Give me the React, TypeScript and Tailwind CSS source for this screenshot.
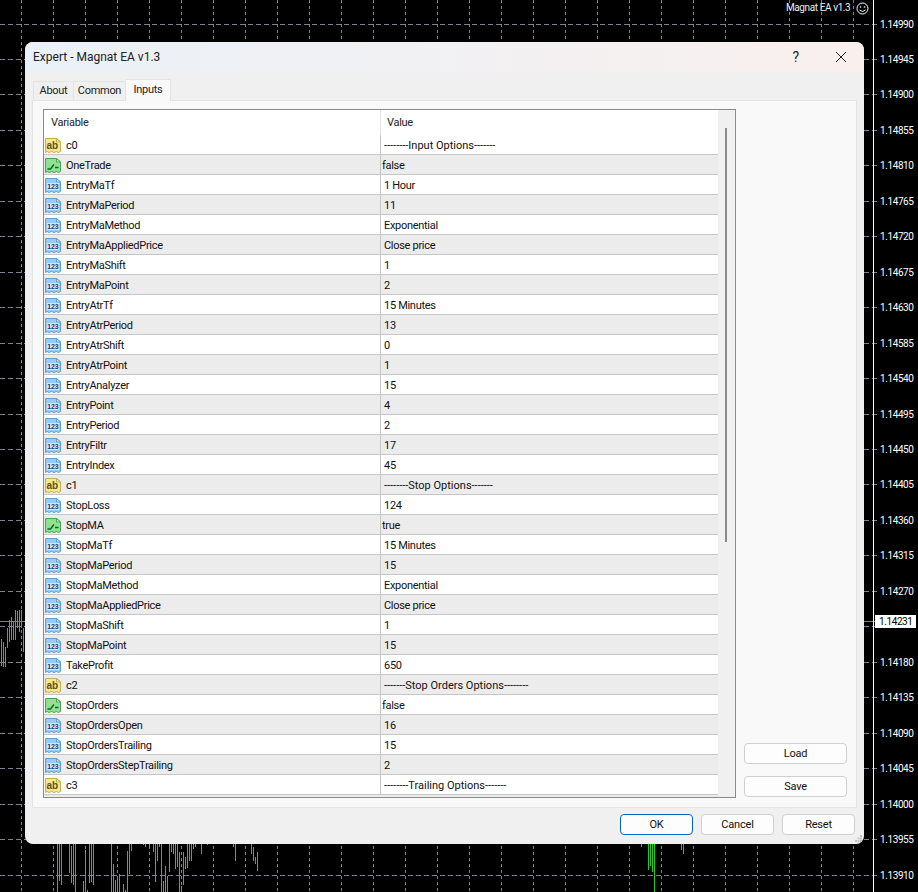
const font = { fontFamily: '"Roboto", "Liberation Sans", sans-serif' };

type Kind = 'ab' | 'bool' | 'num';

const rows: [Kind, string, string][] = [
  ['ab', 'c0', '--------Input Options-------'],
  ['bool', 'OneTrade', 'false'],
  ['num', 'EntryMaTf', '1 Hour'],
  ['num', 'EntryMaPeriod', '11'],
  ['num', 'EntryMaMethod', 'Exponential'],
  ['num', 'EntryMaAppliedPrice', 'Close price'],
  ['num', 'EntryMaShift', '1'],
  ['num', 'EntryMaPoint', '2'],
  ['num', 'EntryAtrTf', '15 Minutes'],
  ['num', 'EntryAtrPeriod', '13'],
  ['num', 'EntryAtrShift', '0'],
  ['num', 'EntryAtrPoint', '1'],
  ['num', 'EntryAnalyzer', '15'],
  ['num', 'EntryPoint', '4'],
  ['num', 'EntryPeriod', '2'],
  ['num', 'EntryFiltr', '17'],
  ['num', 'EntryIndex', '45'],
  ['ab', 'c1', '--------Stop Options-------'],
  ['num', 'StopLoss', '124'],
  ['bool', 'StopMA', 'true'],
  ['num', 'StopMaTf', '15 Minutes'],
  ['num', 'StopMaPeriod', '15'],
  ['num', 'StopMaMethod', 'Exponential'],
  ['num', 'StopMaAppliedPrice', 'Close price'],
  ['num', 'StopMaShift', '1'],
  ['num', 'StopMaPoint', '15'],
  ['num', 'TakeProfit', '650'],
  ['ab', 'c2', '-------Stop Orders Options--------'],
  ['bool', 'StopOrders', 'false'],
  ['num', 'StopOrdersOpen', '16'],
  ['num', 'StopOrdersTrailing', '15'],
  ['num', 'StopOrdersStepTrailing', '2'],
  ['ab', 'c3', '--------Trailing Options-------'],
];

const prices = [
  '1.14990', '1.14945', '1.14900', '1.14855', '1.14810', '1.14765', '1.14720', '1.14675', '1.14630',
  '1.14585', '1.14540', '1.14495', '1.14450', '1.14405', '1.14360', '1.14315', '1.14270', '1.14225',
  '1.14180', '1.14135', '1.14090', '1.14045', '1.14000', '1.13955', '1.13910',
];

// x, top, bottom of each candle wick
const bars: [number, number, number][] = [
  [1, 639, 666], [3, 642, 667], [5, 647, 667], [7, 628, 648], [9, 620, 642], [11, 617, 640], [13, 622, 640],
  [15, 610, 640], [17, 611, 628], [19, 610, 632], [21, 610, 628], [23, 628, 652],
  [57, 844, 892], [59, 844, 881], [61, 844, 885], [69, 844, 873], [71, 846, 883], [73, 844, 885], [75, 844, 892],
  [83, 881, 892], [85, 850, 892], [87, 890, 892], [89, 844, 883], [91, 844, 882], [93, 844, 885],
  [111, 844, 892], [113, 864, 892], [115, 880, 892], [117, 876, 892], [119, 874, 892], [123, 884, 892], [125, 890, 892],
  [127, 851, 892], [129, 844, 874], [131, 844, 851], [143, 844, 845], [145, 844, 847], [149, 844, 848], [153, 844, 852],
  [155, 844, 882], [157, 844, 861], [159, 844, 847], [161, 844, 892], [163, 881, 892], [165, 866, 892], [167, 876, 892],
  [169, 844, 872], [171, 844, 852], [173, 844, 854], [175, 844, 869], [177, 844, 867], [179, 852, 892], [181, 886, 892],
  [183, 852, 885], [185, 857, 869], [187, 844, 868], [189, 844, 861], [191, 844, 861], [193, 844, 849], [195, 844, 847],
  [201, 844, 854], [207, 844, 845], [233, 844, 847], [235, 844, 861], [251, 844, 854], [253, 847, 861], [255, 857, 864],
  [257, 852, 871],
  [641, 844, 847], [648, 844, 870], [650, 844, 866], [652, 844, 872], [654, 844, 892], [681, 844, 850], [683, 844, 854],
];

function Chart() {
  const vert = Array.from({ length: 27 }, (_, i) => 21 + i * 32);
  return (
    <svg className="absolute left-0 top-0 tracking-[-0.4px]" width="918" height="892" style={font}>
      {vert.map((x) => (
        <line key={x} x1={x + 0.5} y1="0" x2={x + 0.5} y2="892" stroke="#7d828c" strokeDasharray="3 3" />
      ))}
      {prices.map((_, i) => {
        const y = Math.round(23.5 + i * 35.46) + 0.5;
        return <line key={i} x1="0" y1={y} x2="879" y2={y} stroke="#7d828c" strokeDasharray="5 3" />;
      })}
      <line x1="0" y1="621.5" x2="878" y2="621.5" stroke="#7f7f7f" />
      {bars.map(([x, a, b], i) => (
        <line key={i} x1={x + 0.5} y1={a} x2={x + 0.5} y2={b} stroke="#22cc22" />
      ))}
      <line x1="873.5" y1="0" x2="873.5" y2="892" stroke="#ffffff" />
      {prices.map((p, i) =>
        p === '1.14225' ? null : (
          <text key={p} x="880" y={Math.round(23.5 + i * 35.46) + 4} fill="#ffffff" fontSize="10">
            {p}
          </text>
        ),
      )}
      <rect x="875" y="615" width="41" height="13" fill="#ffffff" />
      <text x="879" y="625" fill="#000000" fontSize="10">1.14231</text>
      <text x="786" y="11" fill="#e6eef8" fontSize="10">Magnat EA  v1.3</text>
      <circle cx="862.5" cy="8.5" r="5.5" fill="none" stroke="#ffffff" />
      <circle cx="860.5" cy="7" r="0.8" fill="#ffffff" />
      <circle cx="864.5" cy="7" r="0.8" fill="#ffffff" />
      <path d="M859.5 10 Q862.5 13 865.5 10" fill="none" stroke="#ffffff" />
    </svg>
  );
}

function TypeIcon({ kind }: { kind: Kind }) {
  const c = {
    ab: { fill: '#f6e690', stroke: '#c3ad55', fold: '#fdf6cf' },
    bool: { fill: '#8fe08f', stroke: '#45a552', fold: '#d6f6d6' },
    num: { fill: '#9ccaf0', stroke: '#5f9ed2', fold: '#dcedfb' },
  }[kind];
  return (
    <svg width="17" height="16" viewBox="0 0 17 16" className="shrink-0">
      <path
        d="M0.5 1.5 H11.5 L15.5 5 V14.5 L13.5 15.5 L11.5 14.5 L9 15.5 L6.5 14.5 L4 15.5 L2 14.5 L0.5 15.5 Z"
        fill={c.fill}
        stroke={c.stroke}
      />
      <path d="M11.5 1.5 V5 H15.5 Z" fill={c.fold} stroke={c.stroke} />
      {kind === 'ab' && (
        <text x="1.5" y="12" fontSize="10" fontWeight="700" fill="#5c5214" style={{ fontFamily: '"Liberation Sans", sans-serif' }}>
          ab
        </text>
      )}
      {kind === 'num' && (
        <>
          <rect x="2" y="6" width="12" height="7" fill="#d4e7f8" />
          <text x="2.2" y="12.2" fontSize="6.8" fontWeight="700" fill="#173f6b" style={{ fontFamily: '"Liberation Sans", sans-serif' }}>
            123
          </text>
        </>
      )}
      {kind === 'bool' && (
        <path d="M2.5 12 H5.5 L9 7.5 M10 10.5 H13.5" fill="none" stroke="#14632a" strokeWidth="1.4" />
      )}
    </svg>
  );
}

function DlgButton({ label, primary, className }: { label: string; primary?: boolean; className: string }) {
  return (
    <button
      className={`h-[21px] rounded-[4px] border bg-[#fdfdfd] pt-[1px] text-[11px] tracking-[-0.2px] text-[#111] ${
        primary ? 'border-[#0067c0]' : 'border-[#d0d0d0]'
      } ${className}`}
    >
      {label}
    </button>
  );
}

function Row({ kind, name, value, odd }: { kind: Kind; name: string; value: string; odd: boolean }) {
  return (
    <div className={`grid h-5 shrink-0 grid-cols-[337px_1fr] border-b border-[#c6c6c6] ${odd ? 'bg-[#ececec]' : 'bg-white'}`}>
      <div className="flex items-center gap-[4px] border-r border-[#c6c6c6] pl-[1px]">
        <TypeIcon kind={kind} />
        <span className="pt-[1px] text-[11px] leading-none tracking-[-0.3px] text-[#111]">{name}</span>
      </div>
      <div
        className={`flex items-center pt-[1px] text-[11px] leading-none text-[#111] ${
          kind === 'ab' ? 'pl-[3px] tracking-normal' : kind === 'bool' ? 'pl-[1px] tracking-[-0.3px]' : 'pl-[3px] tracking-[-0.3px]'
        }`}
      >
        {value}
      </div>
    </div>
  );
}

export default function App() {
  return (
    <div className="relative h-[892px] w-[918px] overflow-hidden bg-black" style={font}>
      <Chart />
      <div className="absolute left-[25px] top-[42px] flex h-[802px] w-[839px] flex-col rounded-lg bg-[#f0f0f0]">
        <div className="flex h-[30px] shrink-0 items-center justify-between rounded-t-lg bg-gradient-to-r from-[#eaf1f7] to-[#f9f0ee] pl-2 pr-[17px] text-xs text-[#222]">
          <span>Expert - Magnat EA v1.3</span>
          <div className="flex items-center gap-[36px]">
            <span className="text-sm">?</span>
            <svg width="12" height="12" viewBox="0 0 12 12">
              <path d="M1 1 L11 11 M11 1 L1 11" stroke="#222" fill="none" />
            </svg>
          </div>
        </div>

        <div className="mt-[7px] flex h-[21px] shrink-0 items-end pl-2 text-[11px] tracking-[-0.3px] text-[#222]">
          <div className="flex h-[19px] w-[41px] items-center justify-center border border-b-0 border-[#e4e4e4] bg-[#f0f0f0] pt-[1px]">About</div>
          <div className="flex h-[19px] w-[52px] items-center justify-center border border-b-0 border-l-0 border-[#e4e4e4] bg-[#f0f0f0] pt-[1px]">Common</div>
          <div className="relative top-[1px] flex h-[22px] w-[45px] items-start justify-center border border-b-0 border-l-0 border-[#e4e4e4] bg-[#f9f9f9] pt-[2px]">Inputs</div>
        </div>

        <div className="mx-[7px] flex h-[708px] shrink-0 gap-2 border border-[#e4e4e4] bg-[#f9f9f9] pl-[10px] pt-2">
          <div className="flex h-[689px] w-[693px] shrink-0 overflow-hidden border border-[#8a8a8a] bg-white">
            <div className="flex w-[674px] shrink-0 flex-col">
              <div className="grid h-[25px] shrink-0 grid-cols-[337px_1fr] text-[11px] tracking-[-0.3px] text-[#222]">
                <div className="flex items-center border-r border-[#e4e4e4] pl-[7px] pt-[1px]">Variable</div>
                <div className="flex items-center pl-[6px] pt-[1px]">Value</div>
              </div>
              {rows.map(([kind, name, value], i) => (
                <Row key={name} kind={kind} name={name} value={value} odd={i % 2 === 1} />
              ))}
              <div className="h-5 shrink-0 bg-[#ececec]" />
            </div>
            <div className="flex flex-1 bg-[#f0f0f0] pl-[7px] pt-[18px]">
              <div className="h-[414px] w-[2px] bg-[#8a8a8a]" />
            </div>
          </div>
          <div className="flex h-[688px] flex-col justify-end gap-[12px]">
            <DlgButton label="Load" className="w-[103px]" />
            <DlgButton label="Save" className="w-[103px]" />
          </div>
        </div>

        <div className="relative flex flex-1 items-start justify-end gap-2 pr-[9px] pt-[6px]">
          <DlgButton label="OK" primary className="w-[73px]" />
          <DlgButton label="Cancel" className="w-[73px]" />
          <DlgButton label="Reset" className="w-[73px]" />
          <svg className="absolute bottom-[1px] right-[1px]" width="8" height="8" viewBox="0 0 8 8" fill="#c4c4c4">
            <rect x="5" y="0" width="2" height="2" />
            <rect x="2.5" y="2.5" width="2" height="2" />
            <rect x="5" y="2.5" width="2" height="2" />
            <rect x="0" y="5" width="2" height="2" />
            <rect x="2.5" y="5" width="2" height="2" />
            <rect x="5" y="5" width="2" height="2" />
          </svg>
        </div>
      </div>
    </div>
  );
}
